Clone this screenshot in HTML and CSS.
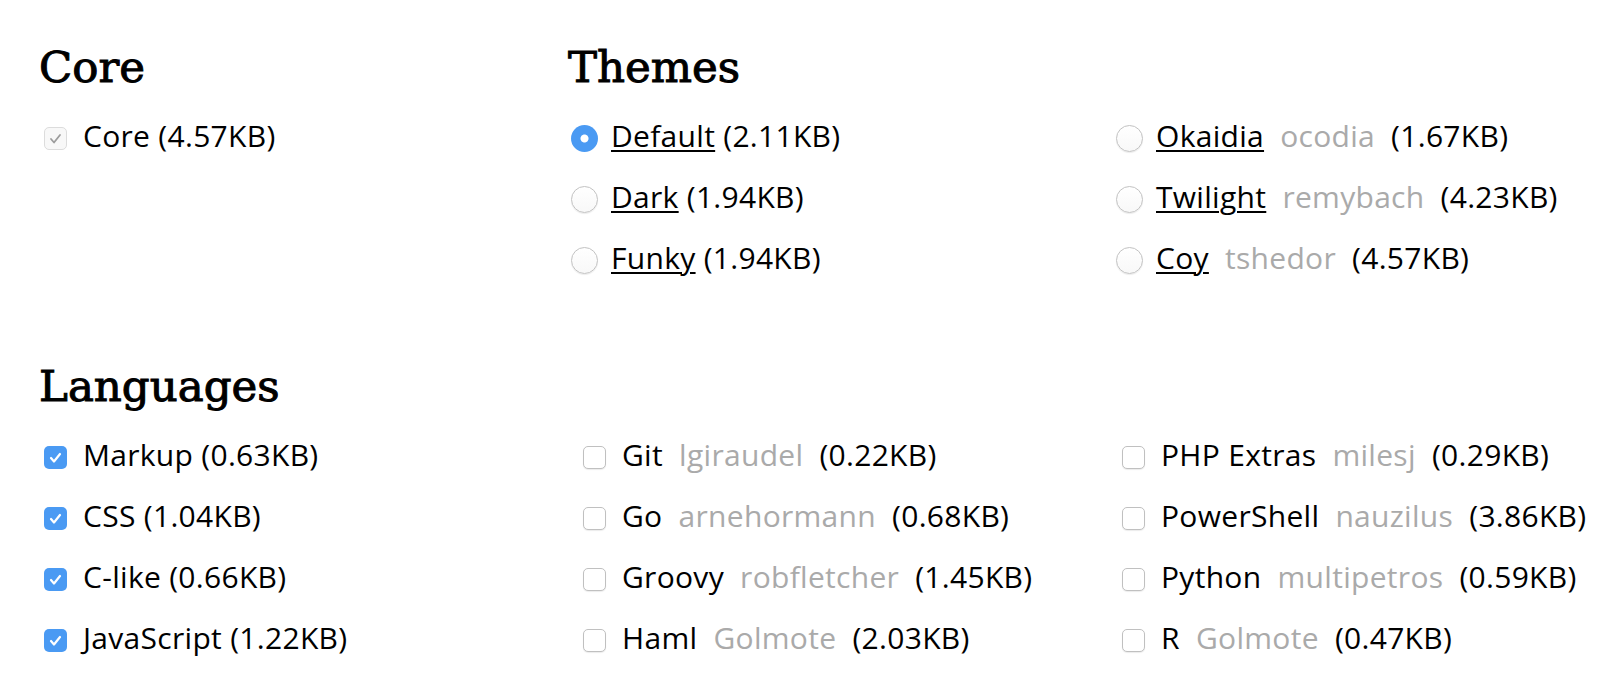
FILE: index.html
```html
<!DOCTYPE html>
<html lang="en">
<head>
<meta charset="utf-8">
<title>Download Prism</title>
<link rel="stylesheet" href="styles.css">
</head>
<body>
<div class="page">
  <div class="top">
    <section class="core">
      <h2 class="heading">Core</h2>
      <div class="row">
        <span class="box box-disabled"><svg viewBox="0 0 23 23"><path d="M7 12 L10 15.5 L16 8"/></svg></span>
        <span class="label">Core <span class="size">(4.57KB)</span></span>
      </div>
    </section>
    <section class="themes">
      <h2 class="heading">Themes</h2>
      <div class="theme-grid">
        <div class="row"><span class="radio radio-on"></span><span class="label"><a class="name">Default</a> <span class="size">(2.11KB)</span></span></div>
        <div class="row"><span class="radio"></span><span class="label"><a class="name">Dark</a> <span class="size">(1.94KB)</span></span></div>
        <div class="row"><span class="radio"></span><span class="label"><a class="name">Funky</a> <span class="size">(1.94KB)</span></span></div>
        <div class="row"><span class="radio"></span><span class="label"><a class="name">Okaidia</a> <span class="owner">ocodia</span> <span class="size">(1.67KB)</span></span></div>
        <div class="row"><span class="radio"></span><span class="label"><a class="name">Twilight</a> <span class="owner">remybach</span> <span class="size">(4.23KB)</span></span></div>
        <div class="row"><span class="radio"></span><span class="label"><a class="name">Coy</a> <span class="owner">tshedor</span> <span class="size">(4.57KB)</span></span></div>
      </div>
    </section>
  </div>
  <section class="languages">
    <h2 class="heading">Languages</h2>
    <div class="lang-grid">
      <div class="row"><span class="box box-on"><svg viewBox="0 0 23 23"><path d="M7 12 L10 15.5 L16 8"/></svg></span><span class="label">Markup <span class="size">(0.63KB)</span></span></div>
      <div class="row"><span class="box box-on"><svg viewBox="0 0 23 23"><path d="M7 12 L10 15.5 L16 8"/></svg></span><span class="label">CSS <span class="size">(1.04KB)</span></span></div>
      <div class="row"><span class="box box-on"><svg viewBox="0 0 23 23"><path d="M7 12 L10 15.5 L16 8"/></svg></span><span class="label">C-like <span class="size">(0.66KB)</span></span></div>
      <div class="row"><span class="box box-on"><svg viewBox="0 0 23 23"><path d="M7 12 L10 15.5 L16 8"/></svg></span><span class="label">JavaScript <span class="size">(1.22KB)</span></span></div>
      <div class="row"><span class="box"></span><span class="label">Git <span class="owner">lgiraudel</span> <span class="size">(0.22KB)</span></span></div>
      <div class="row"><span class="box"></span><span class="label">Go <span class="owner">arnehormann</span> <span class="size">(0.68KB)</span></span></div>
      <div class="row"><span class="box"></span><span class="label">Groovy <span class="owner">robfletcher</span> <span class="size">(1.45KB)</span></span></div>
      <div class="row"><span class="box"></span><span class="label">Haml <span class="owner">Golmote</span> <span class="size">(2.03KB)</span></span></div>
      <div class="row"><span class="box"></span><span class="label">PHP Extras <span class="owner">milesj</span> <span class="size">(0.29KB)</span></span></div>
      <div class="row"><span class="box"></span><span class="label">PowerShell <span class="owner">nauzilus</span> <span class="size">(3.86KB)</span></span></div>
      <div class="row"><span class="box"></span><span class="label">Python <span class="owner">multipetros</span> <span class="size">(0.59KB)</span></span></div>
      <div class="row"><span class="box"></span><span class="label">R <span class="owner">Golmote</span> <span class="size">(0.47KB)</span></span></div>
    </div>
  </section>
</div>
</body>
</html>
```
FILE: styles.css
```css
html, body {
  margin: 0;
  padding: 0;
  background: #ffffff;
  overflow: hidden;
}

body {
  font-family: "Open Sans", "Liberation Sans", Arial, sans-serif;
  font-size: 30px;
  letter-spacing: 0.3px;
  color: #000000;
}

.page {
  padding: 43px 0 0 39px;
}

.heading {
  margin: 0 0 15px 0;
  font-family: "DejaVu Serif", "Liberation Serif", serif;
  font-weight: normal;
  font-size: 43.5px;
  line-height: 48px;
  letter-spacing: 0;
  color: #000000;
  -webkit-text-stroke: 1px #000000;
}

.top {
  display: flex;
}

.core {
  width: 529px;
  flex: none;
}

.themes {
  flex: none;
}

.theme-grid {
  display: grid;
  grid-template-columns: 545px auto;
  grid-template-rows: repeat(3, 61px);
  grid-auto-flow: column;
}

.languages {
  margin-top: 73px;
}

.lang-grid {
  display: grid;
  grid-template-columns: 539px 539px auto;
  grid-template-rows: repeat(4, 61px);
  grid-auto-flow: column;
}

.row {
  height: 61px;
  display: flex;
  align-items: center;
  white-space: nowrap;
}

.label {
  line-height: 59px;
  padding-bottom: 2px;
}

.name {
  color: #000000;
  text-decoration: underline;
  text-underline-offset: 3px;
  text-decoration-thickness: 2px;
}

.owner {
  color: #aaaaaa;
  margin: 0 8px;
}

.size {
  color: #000000;
}

.box {
  flex: none;
  width: 23px;
  height: 23px;
  box-sizing: border-box;
  margin: 3px 16px 0 5px;
  border-radius: 5px;
  border: 1px solid #c0c0c0;
  background: #ffffff;
  box-shadow: 0 1px 1px rgba(0, 0, 0, 0.08);
  display: flex;
  align-items: center;
  justify-content: center;
}

.box svg {
  width: 23px;
  height: 23px;
  flex: none;
}

.box svg path {
  fill: none;
  stroke-width: 2.2;
  stroke-linecap: round;
  stroke-linejoin: round;
}

.box-on {
  border: none;
  background: #4a9af3;
  box-shadow: none;
}

.box-on svg path {
  stroke: #ffffff;
}

.box-disabled {
  border: 1px solid #dcdcdc;
  background: #f8f8f8;
  box-shadow: none;
}

.box-disabled svg path {
  stroke: #9c9c9c;
  stroke-width: 1.8;
}

.radio {
  flex: none;
  width: 27px;
  height: 27px;
  box-sizing: border-box;
  margin: 4px 13px 0 3px;
  border-radius: 50%;
  border: 1px solid #c2c2c2;
  background: linear-gradient(#ffffff, #f8f8f8);
  box-shadow: 0 1px 1px rgba(0, 0, 0, 0.08);
}

.radio-on {
  border: none;
  background: radial-gradient(circle, #ffffff 0, #ffffff 3.5px, #4a9af3 4.5px);
  box-shadow: none;
}
```
